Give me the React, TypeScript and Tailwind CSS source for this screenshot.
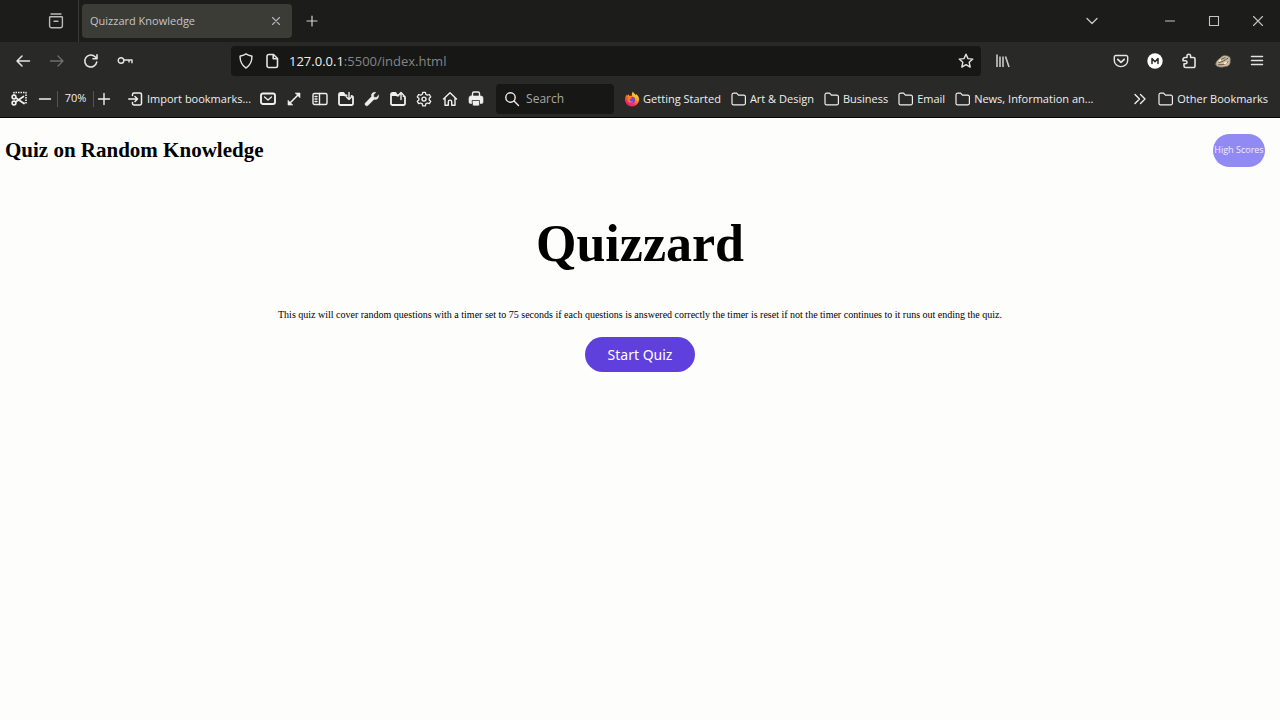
import type { ReactNode } from "react";

type IconProps = { children: ReactNode; className?: string };

function Icon({ children, className = "" }: IconProps) {
  return (
    <svg
      width="16"
      height="16"
      viewBox="0 0 16 16"
      fill="none"
      stroke="currentColor"
      strokeWidth="1.4"
      strokeLinecap="round"
      strokeLinejoin="round"
      className={`shrink-0 ${className}`}
      aria-hidden="true"
    >
      {children}
    </svg>
  );
}

function IconButton({ label, children, className = "" }: { label: string; children: ReactNode; className?: string }) {
  return (
    <button type="button" aria-label={label} className={`flex shrink-0 items-center justify-center ${className}`}>
      {children}
    </button>
  );
}

function Folder() {
  return (
    <Icon>
      <path d="M1 12.2V3.8a1.6 1.6 0 0 1 1.6-1.6h3l1.8 1.9h5.4a1.6 1.6 0 0 1 1.6 1.6v6.5a1.6 1.6 0 0 1-1.6 1.6H2.6A1.6 1.6 0 0 1 1 12.2Z" strokeWidth="1.2" />
    </Icon>
  );
}

function Firefox() {
  return (
    <svg width="16" height="16" viewBox="0 0 16 16" className="shrink-0" aria-hidden="true">
      <defs>
        <linearGradient id="flame" x1="0.85" y1="0.05" x2="0.25" y2="1">
          <stop offset="0" stopColor="#fff04a" />
          <stop offset="0.4" stopColor="#ff9a1f" />
          <stop offset="0.7" stopColor="#ff3b47" />
          <stop offset="1" stopColor="#e31587" />
        </linearGradient>
      </defs>
      <path d="M9 .5c.4 1.8 2 2.4 3 3.7.2-.6.1-1 .1-1.3 1.9 1.4 3 3.5 3 5.7A7 7 0 0 1 8 15.5 7 7 0 0 1 .9 8.6c0-2.2.8-4 2-5.2v1.5c.6-.9 1.1-1.3 1.9-1.7 0 .7.3 1.2.8 1.7 1-.2 1.8 0 2.3.1C7.6 3.2 8.1 1.6 9 .5Z" fill="url(#flame)" />
      <circle cx="8" cy="8.9" r="3.1" fill="#7444d8" />
      <path d="M4.4 6.2c1.4-.5 2.8-.1 3.8 1-1 .1-1.5.8-2.5 1.1.2 2 2 2.7 3.6 2.1-2 2.3-5.5 1.1-5.7-1.7 0-.9.3-1.8.8-2.5Z" fill="#ff7a28" />
    </svg>
  );
}

function TabStrip() {
  return (
    <div className="flex h-[42px] items-center bg-[#1c1c1a]">
      <IconButton label="Recent browsing" className="ml-12 h-8 w-4">
        <Icon className="text-[#b9b9b6]">
          <path d="M3 1h10M1.8 3.7h12.4M2.6 3.7h10.8a1 1 0 0 1 1 1v8.1a2 2 0 0 1-2 2H3.6a2 2 0 0 1-2-2V4.7a1 1 0 0 1 1-1ZM6 8.2h4" />
        </Icon>
      </IconButton>
      <div className="ml-[14px] h-full w-px bg-[#3a3a34]" />
      <div className="ml-[3px] flex h-[34px] w-[210px] items-center justify-between rounded bg-[#3c3c36] px-2">
        <span className="text-[11px] text-[#c4c4ca]">Quizzard Knowledge</span>
        <IconButton label="Close tab" className="w-4">
          <Icon className="text-[#b4b4b4]"><path d="m4.5 4.5 7 7m0-7-7 7" strokeWidth="1.1" /></Icon>
        </IconButton>
      </div>
      <IconButton label="New tab" className="ml-3 w-4">
        <Icon className="text-[#cfcfcf]"><path d="M8 3v10M3 8h10" strokeWidth="1.2" /></Icon>
      </IconButton>
      <div className="ml-auto flex items-center pr-[14px] text-[#c4c4c4]">
        <IconButton label="List all tabs" className="mr-[62px] w-4"><Icon><path d="m3 5.5 5 5 5-5" /></Icon></IconButton>
        <IconButton label="Minimize" className="mr-7 w-4"><Icon><path d="M3.5 8h9" strokeWidth="1.1" /></Icon></IconButton>
        <IconButton label="Maximize" className="mr-7 w-4"><Icon><path d="M3.5 3.5h9v9h-9Z" strokeWidth="1.1" strokeLinejoin="miter" /></Icon></IconButton>
        <IconButton label="Close" className="w-4"><Icon><path d="m3.5 3.5 9 9m0-9-9 9" strokeWidth="1.1" /></Icon></IconButton>
      </div>
    </div>
  );
}

function AddressRow() {
  return (
    <div className="flex h-[38px] items-center pr-[15px] text-[#e4e4e4]">
      <div className="flex w-[231px] shrink-0 items-center gap-[18px] pl-[15px]">
        <IconButton label="Back" className="w-4"><Icon><path d="M14.5 8H2m5-5L2 8l5 5" strokeWidth="1.5" /></Icon></IconButton>
        <IconButton label="Forward" className="w-4"><Icon className="text-[#6f6f6f]"><path d="M1.5 8H14M9 3l5 5-5 5" strokeWidth="1.3" /></Icon></IconButton>
        <IconButton label="Reload" className="w-4"><Icon><path d="M13.7 9.1a6 6 0 1 1-1.6-5.3l1.8 1.8M14 1.8v4H10" strokeWidth="1.6" /></Icon></IconButton>
        <IconButton label="Passwords" className="w-4"><Icon><circle cx="4" cy="7.5" r="2.8" /><path d="M6.8 7H15v2.7M12 7v2" /></Icon></IconButton>
      </div>
      <div className="flex h-[30px] min-w-0 flex-1 items-center rounded bg-[#171716] pr-[7px] pl-[7px]">
        <Icon><path d="M8 .9c2 1.5 4 1.8 6 2.2 0 5.7-1.6 9.2-6 12-4.4-2.8-6-6.3-6-12 2-.4 4-.7 6-2.2Z" /></Icon>
        <Icon className="ml-[10px]"><path d="M3 3.2a1.7 1.7 0 0 1 1.7-1.7h4.8L13.5 5.5v7.3a1.7 1.7 0 0 1-1.7 1.7H4.7A1.7 1.7 0 0 1 3 12.8ZM9.2 1.7v4h4" strokeWidth="1.6" /></Icon>
        <a href="#quiz" className="ml-[9px] flex-1 pt-px text-[13px] text-[#858585]">
          <span className="text-[#eeeeee]">127.0.0.1</span>:5500/index.html
        </a>
        <IconButton label="Bookmark this page" className="w-4"><Icon><path d="m8 1.2 2 4.4 4.8.5-3.6 3.2 1 4.8L8 11.6l-4.2 2.5 1-4.8L1.2 6.1 6 5.6Z" /></Icon></IconButton>
      </div>
      <IconButton label="Library" className="ml-[14px] w-4"><Icon className="text-[#c8c8c8]"><path d="M2 1.5V14M5 3.5V14M8 3.5V14M10.5 3.5 14 14" strokeWidth="1.6" strokeLinecap="butt" /></Icon></IconButton>
      <div className="ml-[102px] flex items-center gap-[18px]">
        <IconButton label="Save to Pocket" className="w-4"><Icon><path d="M2.8 2.5h10.4a1.5 1.5 0 0 1 1.5 1.5v3.5a6.7 6.1 0 0 1-13.4 0V4a1.5 1.5 0 0 1 1.5-1.5Z" /><path d="m4.8 6.4 3.2 2.9 3.2-2.9" strokeWidth="1.8" /></Icon></IconButton>
        <IconButton label="M account" className="w-4"><Icon><circle cx="8" cy="8" r="7.7" fill="#fff" stroke="none" /><path d="M5 10.5v-5l3 3.3 3-3.3v5" stroke="#292927" strokeWidth="1.5" /></Icon></IconButton>
        <IconButton label="Extensions" className="w-4"><Icon><path d="M6 4.500V3a1.800 1.800 0 0 1 3.600 0v1.500h2.900A1.500 1.500 0 0 1 14 6v7a1.500 1.500 0 0 1-1.500 1.500h-8A1.500 1.500 0 0 1 3 13v-2.200h1.500a1.500 1.500 0 0 0 0-3H2V6.500a2 2 0 0 1 2-2Z" strokeWidth="1.6" /></Icon></IconButton>
        <IconButton label="Cookie extension" className="w-4">
          <Icon><path d="M.7 11.500C.7 8 3.500 6.300 5.300 5 6.500 2.700 10 1.700 12.300 2.900c2.400.3 3.700 2.300 2.900 4.600.6 3.500-1.500 6.200-5.600 6.200-2.700.8-8.300.8-8.900-2.200Z" fill="#c9bca2" stroke="#70685a" strokeWidth=".7" /><path d="M4 9.500c3-.2 5.300-2.200 9-4.300M3.500 11.700c3.500.6 7-.3 9.500-2.800M6.500 6.200 10 4.700" stroke="#554936" strokeWidth=".9" /><path d="m4.500 8 1-1M9.500 10.500l2-.8" stroke="#fff4dc" /></Icon>
        </IconButton>
        <IconButton label="Application menu" className="w-4"><Icon><path d="M2.500 3.500h11M2.500 7.500h11M2.500 11.500h11" strokeWidth="1.5" /></Icon></IconButton>
      </div>
    </div>
  );
}

const folders = ["Art & Design", "Business", "Email", "News, Information an..."];

function BookmarksRow() {
  return (
    <div className="flex h-[38px] items-center border-b border-[#050505] pr-3 pl-[11px] text-[11px] whitespace-nowrap text-[#efefef]">
      <IconButton label="Take a screenshot" className="w-4">
        <Icon><path d="M3 5V1.500h12V12h-3" strokeDasharray="1.500 1" strokeWidth="1.6" strokeLinecap="butt" /><path d="m4.500 11 8-5.500M5 7l8 5.500" strokeWidth="1.7" /><circle cx="3" cy="6" r="1.900" strokeWidth="1.6" /><circle cx="3" cy="12" r="1.900" strokeWidth="1.6" /></Icon>
      </IconButton>
      <IconButton label="Zoom out" className="ml-[10px] w-4"><Icon><path d="M2.500 8h11" /></Icon></IconButton>
      <div className="ml-1 h-4 w-px bg-[#55554c]" />
      <button type="button" className="w-[35px] text-center">70%</button>
      <div className="h-4 w-px bg-[#55554c]" />
      <IconButton label="Zoom in" className="ml-[2px] w-4"><Icon><path d="M8 2.500v11M2.500 8h11" /></Icon></IconButton>
      <button type="button" className="ml-4 flex items-center gap-[3px]">
        <Icon><path d="M4.500 4.500v-1A1.500 1.500 0 0 1 6 2h6a1.500 1.500 0 0 1 1.500 1.500v9A1.500 1.500 0 0 1 12 14H6a1.500 1.500 0 0 1-1.500-1.500v-1M.7 8H9M7 5.500 9.500 8 7 10.500" strokeWidth="1.5" /></Icon>
        <span className="pt-px">Import bookmarks...</span>
      </button>
      <div className="ml-[9px] flex items-center gap-[10px]">
        <IconButton label="Email link"><Icon><rect x="1" y="2.500" width="14" height="10.500" rx="2" strokeWidth="1.900" /><path d="m4.500 6 3.500 3 3.500-3" strokeWidth="1.300" /></Icon></IconButton>
        <IconButton label="Full screen"><Icon><path d="M3 13 13 3" strokeWidth="1.6" /><path d="M9.500 2H14v4.500ZM2 9.500V14h4.500Z" fill="currentColor" strokeWidth=".6" /></Icon></IconButton>
        <IconButton label="Sidebars"><Icon><rect x="1" y="2.500" width="14" height="11" rx="1.500" /><path d="M7.500 2.500v11M3 5.500h2M3 8h2M3 10.500h2" /></Icon></IconButton>
        <IconButton label="Save file"><Icon><path d="M8.500 4.500H7L5.500 2H2.600A1.600 1.600 0 0 0 1 3.600v8.900A1.500 1.500 0 0 0 2.500 14h11a1.500 1.500 0 0 0 1.500-1.500v-6A1.500 1.500 0 0 0 13.500 5M1 4h6" strokeWidth="1.8" /><path d="M11 1.500v7M8.500 6 11 8.500 13.500 6" /></Icon></IconButton>
        <IconButton label="Developer tools"><Icon><path d="M14.500 4.200 12.300 6.400l-2.500-.2-.2-2.500 2.200-2.200C8.800.5 6.700 3.300 7.600 5.600l-6.200 6.300c-1.500 1.600.9 4 2.500 2.500l6.300-6.200c2.700.9 5-1.200 4.300-4Z" fill="currentColor" strokeWidth=".4" /></Icon></IconButton>
        <IconButton label="Open file"><Icon><path d="M8.500 4.500H7L5.500 2H2.600A1.600 1.600 0 0 0 1 3.600v8.900A1.500 1.500 0 0 0 2.500 14h11a1.500 1.500 0 0 0 1.500-1.500v-6A1.500 1.500 0 0 0 13.500 5M1 4h6" strokeWidth="1.8" /><path d="M11 8.500v-7M8.500 4 11 1.500 13.500 4" /></Icon></IconButton>
        <IconButton label="Settings"><Icon><path d="m6.700 1.300-.4 2-1.600.9-2-.7-1.400 2.400 1.600 1.300v1.800L1.300 10.300l1.400 2.400 2-.7 1.600.9.400 2h2.700l.4-2 1.500-.9 2 .7 1.400-2.400L13.200 9V7.200l1.500-1.300-1.400-2.400-2 .7-1.500-.9-.4-2Z" strokeWidth="1.3" /><circle cx="8" cy="8.100" r="2" /></Icon></IconButton>
        <IconButton label="Home"><Icon><path d="M1.500 8 8 1.700 14.500 8M3 7v7.300h3.300v-3.500a1.700 1.700 0 0 1 3.400 0v3.500H13V7" /></Icon></IconButton>
        <IconButton label="Print"><Icon><path d="M4.500 5V2.500A1.500 1.500 0 0 1 6 1h4a1.500 1.500 0 0 1 1.500 1.500V5" /><path d="M3 5h10a2 2 0 0 1 2 2v4a1.500 1.500 0 0 1-1.500 1.500h-11A1.500 1.500 0 0 1 1 11V7a2 2 0 0 1 2-2Z" fill="currentColor" strokeWidth=".6" /><path d="M4.500 9.500h7v4.200a1.300 1.300 0 0 1-1.300 1.300H5.800a1.300 1.300 0 0 1-1.300-1.300Z" fill="currentColor" stroke="#292927" strokeWidth=".8" /></Icon></IconButton>
      </div>
      <label className="ml-3 flex h-[30px] w-[118px] items-center gap-[6px] rounded bg-[#171716] pl-2">
        <Icon><circle cx="6.500" cy="6.500" r="4.700" /><path d="m10 10 4.500 4.500" /></Icon>
        <input type="search" aria-label="Search the web" placeholder="Search" className="w-full min-w-0 bg-transparent pt-px text-[12px] outline-none placeholder:text-[#a7a7a7]" />
      </label>
      <nav aria-label="Bookmarks" className="ml-[10px] flex items-center gap-[10px]">
        <a href="#getting-started" className="flex items-center gap-[3px]"><Firefox /><span className="pt-px">Getting Started</span></a>
        {folders.map((name) => (
          <button type="button" key={name} className="flex items-center gap-[3px]"><Folder /><span className="pt-px">{name}</span></button>
        ))}
      </nav>
      <IconButton label="More bookmarks" className="ml-auto"><Icon><path d="m3 3.500 4.500 4.500L3 12.500M8.500 3.500 13 8l-4.500 4.500" /></Icon></IconButton>
      <button type="button" className="ml-[10px] flex items-center gap-[3px]"><Folder /><span className="pt-px">Other Bookmarks</span></button>
    </div>
  );
}

export default function App() {
  return (
    <div className="min-h-screen bg-[#fdfdfb]">
      <header className="bg-[#292927] font-['Open_Sans','Noto_Sans',sans-serif]">
        <TabStrip />
        <AddressRow />
        <BookmarksRow />
      </header>
      <div id="quiz" className="font-['Liberation_Serif',serif] text-black">
        <div className="flex h-16 items-center justify-between pr-[15px] pl-[5px]">
          <h2 className="pt-px text-[21px] font-bold">Quiz on Random Knowledge</h2>
          <button type="button" className="h-[33px] w-[52px] rounded-full bg-[#9189f4] font-['Open_Sans',sans-serif] text-[9px] whitespace-nowrap text-[#f1edff]">High Scores</button>
        </div>
        <main className="flex flex-col items-center pt-[29px]">
          <h1 className="text-[52px] leading-[66px] font-bold">Quizzard</h1>
          <p className="mt-[30px] text-[10px] leading-4">This quiz will cover random questions with a timer set to 75 seconds if each questions is answered correctly the timer is reset if not the timer continues to it runs out ending the quiz.</p>
          <button type="button" className="mt-[14px] h-[35px] w-[110px] rounded-full bg-[#6040dc] font-['Noto_Sans',sans-serif] text-[14px] text-white">Start Quiz</button>
        </main>
      </div>
    </div>
  );
}
